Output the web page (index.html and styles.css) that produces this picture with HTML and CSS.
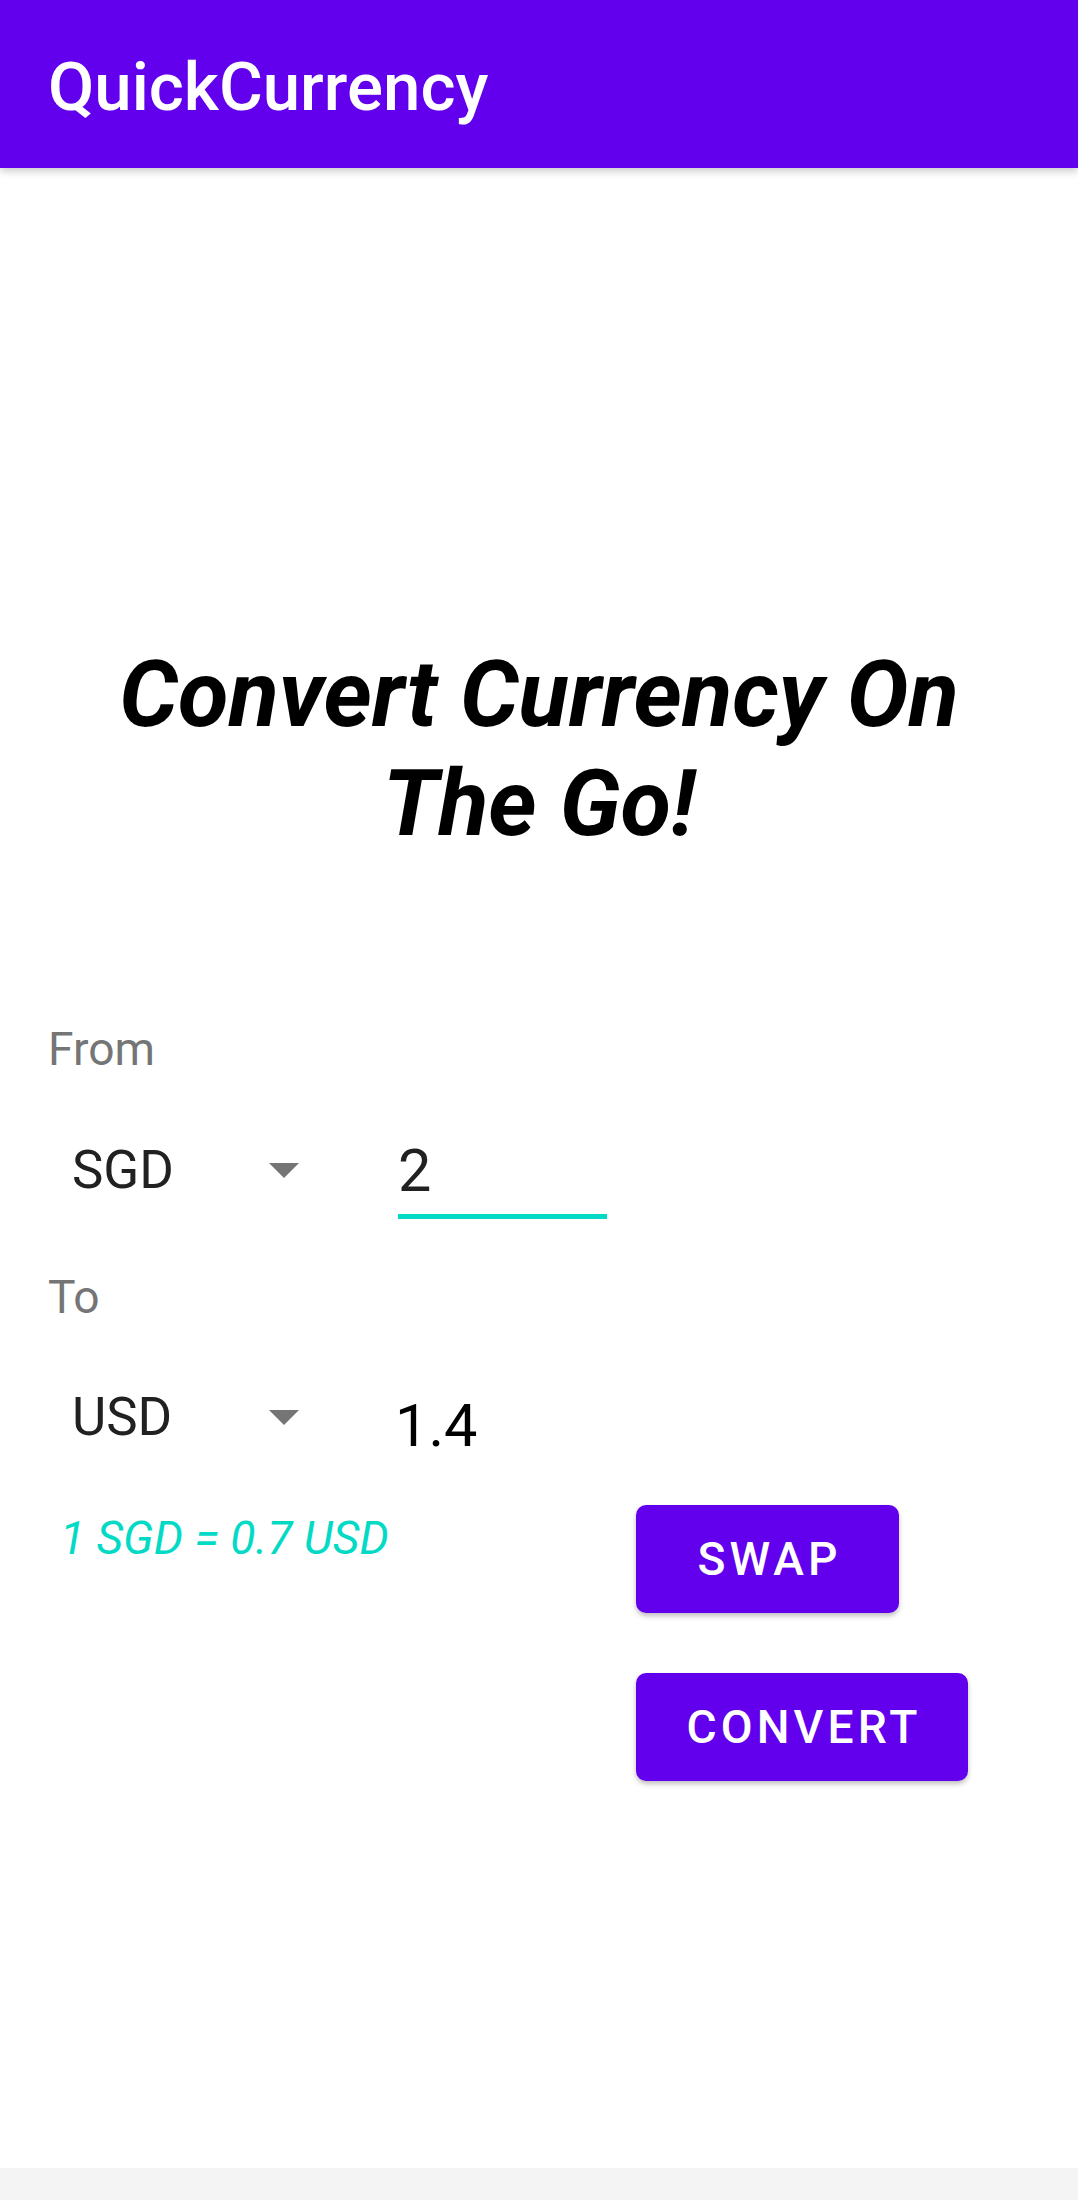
FILE: index.html
```html
<!DOCTYPE html>
<html>
<head>
<meta charset="utf-8">
<link rel="stylesheet" href="styles.css">
</head>
<body>
<div class="screen">
  <header class="appbar"><span class="appbar-title">QuickCurrency</span></header>
  <main class="content">
    <h1 class="headline">Convert Currency On<br>The Go!</h1>
    <div class="label label-from">From</div>
    <div class="row row-from">
      <div class="spinner spinner-from"><span class="spinner-text">SGD</span><span class="caret"></span></div>
      <div class="amount-input">2</div>
    </div>
    <div class="label label-to">To</div>
    <div class="row row-to">
      <div class="spinner spinner-to"><span class="spinner-text">USD</span><span class="caret"></span></div>
      <div class="amount-result">1.4</div>
    </div>
    <div class="lower">
      <div class="rate">1 SGD = 0.7 USD</div>
      <div class="buttons">
        <button class="btn btn-swap">Swap</button>
        <button class="btn btn-convert">Convert</button>
      </div>
    </div>
  </main>
  <footer class="navbar"></footer>
</div>
</body>
</html>
```
FILE: styles.css
```css
html, body {
  margin: 0;
  padding: 0;
  background: #ffffff;
}
body {
  font-family: Roboto, "Liberation Sans", sans-serif;
}
.screen {
  display: flex;
  flex-direction: column;
  min-height: 2200px;
  width: 1078px;
}
.appbar {
  height: 168px;
  box-sizing: border-box;
  background: #6200ee;
  padding: 48px 0 0 48px;
  box-shadow: 0 3px 8px rgba(0, 0, 0, 0.22);
  position: relative;
  z-index: 1;
}
.appbar-title {
  display: block;
  color: #ffffff;
  font-size: 67.2px;
  font-weight: 500;
  line-height: normal;
}
.content {
  flex: 1;
  display: flex;
  flex-direction: column;
}
.headline {
  margin: 472px 0 0 0;
  text-align: center;
  font-size: 92.4px;
  font-weight: 700;
  font-style: italic;
  line-height: normal;
  color: #000000;
}
.label {
  margin-left: 48px;
  font-size: 46.2px;
  line-height: 54px;
  color: #757575;
}
.label-from {
  margin-top: 164px;
}
.label-to {
  margin-top: 51px;
}
.row {
  display: flex;
  align-items: flex-start;
  padding-left: 48px;
}
.spinner {
  display: flex;
  align-items: center;
  padding-left: 24px;
  width: 227px;
  margin-right: 99px;
}
.spinner-from {
  margin-top: 63px;
}
.spinner-to {
  margin-top: 62px;
}
.spinner-text {
  width: 197px;
  font-size: 52.8px;
  line-height: normal;
  color: #212121;
}
.caret {
  width: 0;
  height: 0;
  border-left: 15px solid transparent;
  border-right: 15px solid transparent;
  border-top: 15px solid #757575;
}
.amount-input {
  margin-top: 60px;
  width: 209px;
  padding-bottom: 8px;
  border-bottom: 5px solid #03dac5;
  font-size: 59.4px;
  line-height: normal;
  color: #212121;
}
.amount-result {
  margin-top: 67px;
  margin-left: -3px;
  font-size: 59.4px;
  line-height: normal;
  color: #000000;
}
.lower {
  display: flex;
  align-items: flex-start;
}
.rate {
  margin: 50px 0 0 60px;
  width: 576px;
  font-size: 46.2px;
  font-style: italic;
  line-height: 54px;
  color: #03dac5;
}
.buttons {
  display: flex;
  flex-direction: column;
  align-items: flex-start;
  gap: 60px;
  margin-top: 44px;
}
.btn {
  height: 108px;
  border: none;
  border-radius: 10px;
  background: #6200ee;
  color: #ffffff;
  font-family: Roboto, "Liberation Sans", sans-serif;
  font-size: 46.2px;
  font-weight: 500;
  letter-spacing: 4.1px;
  text-transform: uppercase;
  padding: 0;
  box-shadow: 0 3px 5px rgba(0, 0, 0, 0.25);
  text-indent: 4px;
}
.btn-swap {
  width: 263px;
}
.btn-convert {
  width: 332px;
}
.navbar {
  height: 32px;
  background: #f4f4f4;
}
```
